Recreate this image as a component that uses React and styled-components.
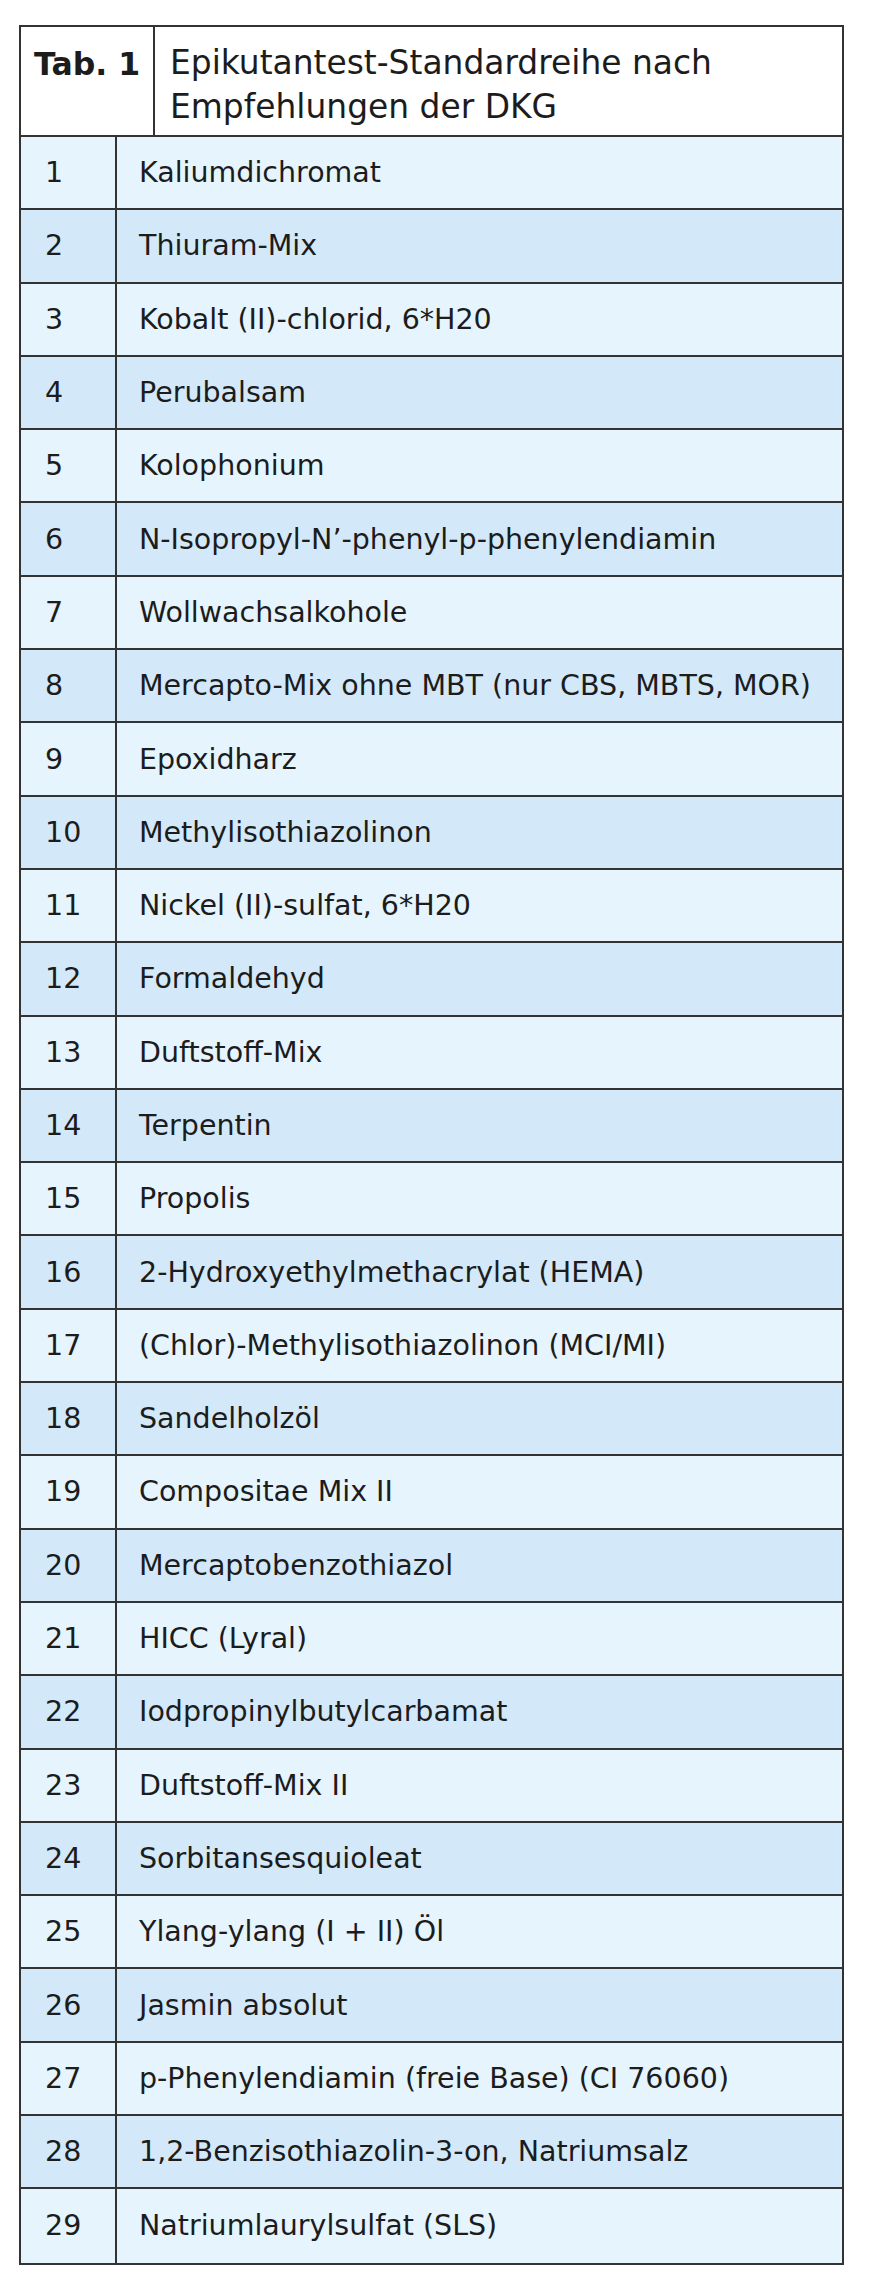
import React from "react";
import styled, { createGlobalStyle } from "styled-components";

const GlobalStyle = createGlobalStyle`
  body {
    margin: 0;
    background: #ffffff;
    font-family: "DejaVu Sans", "Liberation Sans", sans-serif;
    color: #1c1c1c;
  }
`;

const Page = styled.div`
  padding: 25px 0 0 19px;
  width: 880px;
  box-sizing: border-box;
`;

const Table = styled.div`
  width: 825px;
  border: 2px solid #333;
  box-sizing: border-box;
`;

const Header = styled.div`
  display: flex;
  height: 108px;
  border-bottom: 2px solid #333;
  background: #fff;
`;

const Label = styled.div`
  width: 134px;
  flex: none;
  border-right: 2px solid #333;
  padding: 15px 0 0 13px;
  box-sizing: border-box;
  font-weight: 700;
  font-size: 31.5px;
  line-height: 44px;
  white-space: nowrap;
`;

const Title = styled.div`
  flex: 1;
  padding: 14px 0 0 15px;
  font-size: 32.9px;
  line-height: 44px;
`;

const Row = styled.div`
  display: flex;
  height: 73.3px;
  box-sizing: border-box;
  border-bottom: ${p => (p.last ? "none" : "2px solid #333")};
  background: ${p => (p.shade ? "#d3e9f9" : "#e6f4fd")};
  font-size: 28.5px;
`;

const Num = styled.div`
  width: 96px;
  flex: none;
  border-right: 2px solid #333;
  padding-left: 24px;
  box-sizing: border-box;
  display: flex;
  align-items: center;
`;

const Name = styled.div`
  flex: 1;
  padding-left: 22px;
  display: flex;
  align-items: center;
`;

const items = [
  "Kaliumdichromat",
  "Thiuram-Mix",
  "Kobalt (II)-chlorid, 6*H20",
  "Perubalsam",
  "Kolophonium",
  "N-Isopropyl-N’-phenyl-p-phenylendiamin",
  "Wollwachsalkohole",
  "Mercapto-Mix ohne MBT (nur CBS, MBTS, MOR)",
  "Epoxidharz",
  "Methylisothiazolinon",
  "Nickel (II)-sulfat, 6*H20",
  "Formaldehyd",
  "Duftstoff-Mix",
  "Terpentin",
  "Propolis",
  "2-Hydroxyethylmethacrylat (HEMA)",
  "(Chlor)-Methylisothiazolinon (MCI/MI)",
  "Sandelholzöl",
  "Compositae Mix II",
  "Mercaptobenzothiazol",
  "HICC (Lyral)",
  "Iodpropinylbutylcarbamat",
  "Duftstoff-Mix II",
  "Sorbitansesquioleat",
  "Ylang-ylang (I + II) Öl",
  "Jasmin absolut",
  "p-Phenylendiamin (freie Base) (CI 76060)",
  "1,2-Benzisothiazolin-3-on, Natriumsalz",
  "Natriumlaurylsulfat (SLS)"
];

const App = () => (
  <Page>
    <GlobalStyle />
    <Table>
      <Header>
        <Label>Tab. 1</Label>
        <Title>
          Epikutantest-Standardreihe nach
          <br />
          Empfehlungen der DKG
        </Title>
      </Header>
      {items.map((name, i) => (
        <Row key={name} shade={i % 2 === 1} last={i === items.length - 1}>
          <Num>{i + 1}</Num>
          <Name>{name}</Name>
        </Row>
      ))}
    </Table>
  </Page>
);

export default App;
